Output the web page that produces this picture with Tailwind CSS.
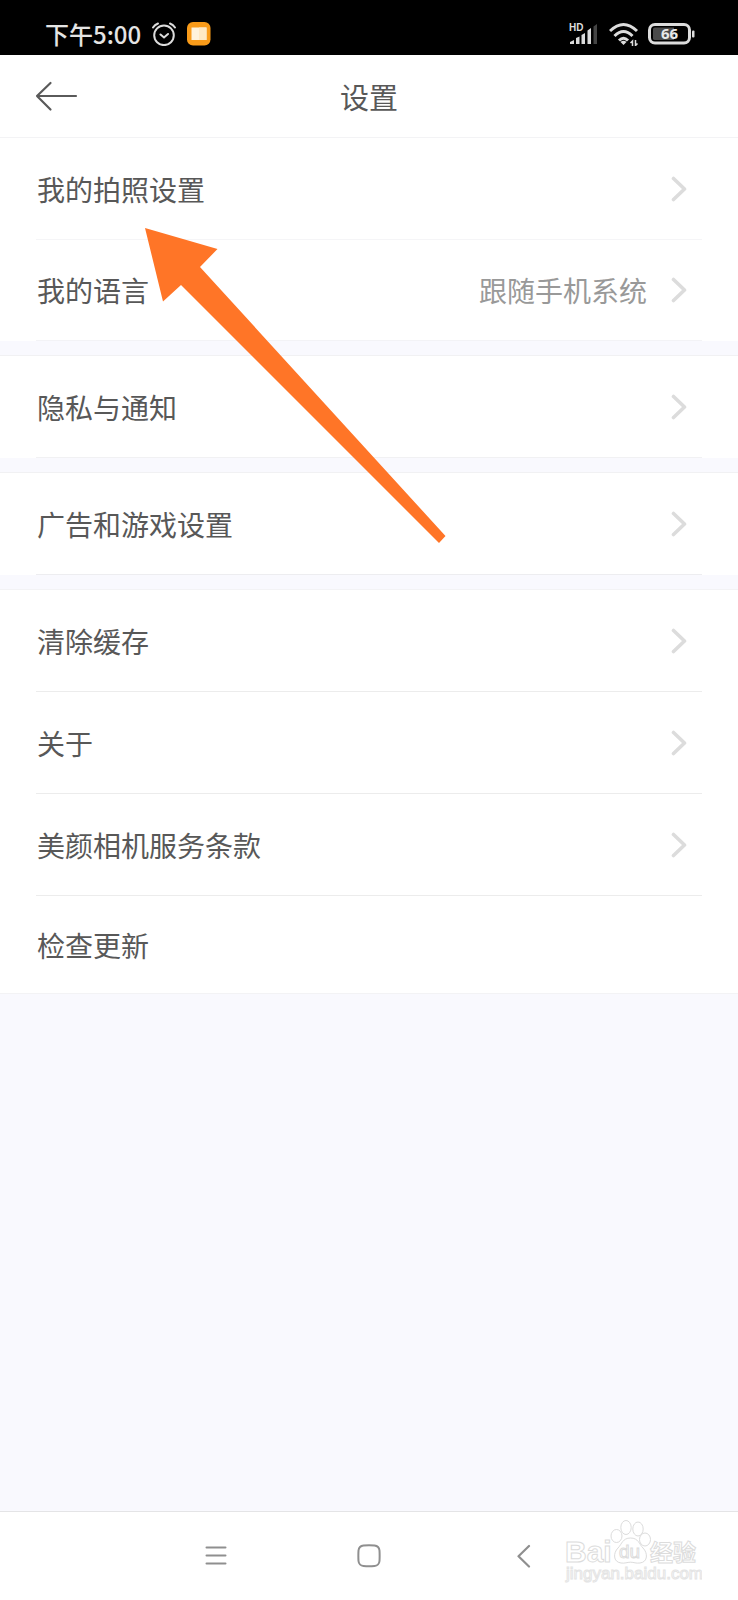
<!DOCTYPE html>
<html lang="zh-CN">
<head>
<meta charset="utf-8">
<meta name="viewport" content="width=device-width, initial-scale=1">
<title>设置</title>
<script src="https://cdn.jsdelivr.net/npm/@tailwindcss/browser@4"></script>
</head>
<body class="relative flex min-h-screen flex-col bg-[#f9f9fe] font-['Noto_Sans_CJK_SC',sans-serif] text-[28px] leading-10 text-[#585858]">

<div class="flex h-[55px] items-center justify-between bg-black pt-3 pr-[42px] pl-[45px] text-[#e4e4e4]">
  <div class="flex items-center">
    <span class="text-2xl leading-8 font-medium">下午5:00</span>
    <svg class="ml-[11px] size-6" viewBox="0 0 24 24" fill="none" stroke="#dcdcdc" stroke-width="2" stroke-linecap="round" aria-label="闹钟"><circle cx="12" cy="13.300" r="9.800"/><path d="M8.500 12.500l3.500 3 4-3.500M1 5.500Q2.800 2.700 6 1.500M23 5.500Q21.200 2.700 18 1.500"/></svg>
    <svg class="ml-[11px] size-6" viewBox="0 0 24 24" aria-label="阅读"><rect width="23.500" height="23.500" rx="6" fill="#f99b19"/><path d="M4.500 5.500h15v12.500h-15z" fill="#fff3dc"/><path d="M12 5.500h7.500V18H12z" fill="#ffe9c4"/></svg>
  </div>
  <div class="flex items-center">
    <svg class="h-6 w-[30px]" viewBox="0 0 30 24" fill="#dcdcdc" aria-label="信号"><text x="0" y="9" font-family="Liberation Sans" font-size="10" font-weight="700">HD</text><path d="M1 22v-2l4-2v4zM7 22v-6l3.500-1.500V22zM12.500 22v-9l3.500-2v11zM18.500 22V8.500L22 6v16z"/><path d="M24.500 22V4.500L28 2v20z" fill="#444"/></svg>
    <svg class="ml-2.5 h-6 w-[30px]" viewBox="0 0 30 24" fill="none" stroke="#dcdcdc" stroke-width="3" aria-label="无线网络"><path d="M1 9Q14.500-4 28 9M5.500 14Q14.500 5 23.500 14M10 18.500Q14.500 14 19 18.500"/><path d="M11.500 20Q14.500 17.500 17.500 20L14.500 23z" fill="#dcdcdc" stroke="none"/><path d="M23.500 24v-5l-2 2M26.500 18v5.500l2-2" stroke-width="1.500"/></svg>
    <svg class="ml-[9px] h-6 w-12" viewBox="0 0 48 24" aria-label="电量"><rect x="1.500" y="2.500" width="40" height="18.500" rx="5.500" fill="none" stroke="#dcdcdc" stroke-width="3"/><path d="M5 7q0-1.500 2-1.500h19v12.500H7q-2 0-2-1.500z" fill="#4a4a4a"/><rect x="44" y="8.500" width="2.500" height="7" rx="1" fill="#dcdcdc"/><text x="21.500" y="17" text-anchor="middle" font-family="Noto Sans" font-size="15" font-weight="700" fill="#e8e8e8">66</text></svg>
  </div>
</div>

<header class="grid h-[83px] grid-cols-[1fr_auto_1fr] items-center border-b border-[#f3f3f5] bg-white px-[35px]">
  <button type="button" aria-label="返回" class="justify-self-start"><svg class="h-8 w-11" viewBox="0 0 44 32" fill="none" stroke="#5a5a5a" stroke-width="2.200" stroke-linecap="round" stroke-linejoin="round"><path d="M41 16H2M15.500 3L2 16l13.500 13.500"/></svg></button>
  <h1 class="text-[29px]">设置</h1>
</header>

<main>
  <section class="bg-white">
    <a href="#" class="mx-9 flex h-[102px] items-center border-b border-[#f5f5f7] pr-[15px] pl-px"><span class="grow">我的拍照设置</span><svg class="h-7 w-4" viewBox="0 0 16 28" fill="none" stroke="#dcdcdc" stroke-width="3.600" stroke-linecap="round" stroke-linejoin="round"><path d="M2.500 3.500L13.500 14 2.500 24.500"/></svg></a>
    <a href="#" class="mx-9 flex h-[101px] items-center border-b border-[#f3f3f6] pr-[15px] pl-px"><span class="grow">我的语言</span><span class="mr-6 text-[#999]">跟随手机系统</span><svg class="h-7 w-4" viewBox="0 0 16 28" fill="none" stroke="#dcdcdc" stroke-width="3.600" stroke-linecap="round" stroke-linejoin="round"><path d="M2.500 3.500L13.500 14 2.500 24.500"/></svg></a>
  </section>
  <section class="mt-3.5 border-t border-[#f1f1f3] bg-white">
    <a href="#" class="mx-9 flex h-[102px] items-center border-b border-[#f1f1f3] pr-[15px] pl-px"><span class="grow">隐私与通知</span><svg class="h-7 w-4" viewBox="0 0 16 28" fill="none" stroke="#dcdcdc" stroke-width="3.600" stroke-linecap="round" stroke-linejoin="round"><path d="M2.500 3.500L13.500 14 2.500 24.500"/></svg></a>
  </section>
  <section class="mt-3.5 border-t border-[#f1f1f3] bg-white">
    <a href="#" class="mx-9 flex h-[102px] items-center border-b border-[#ededf0] pr-[15px] pl-px"><span class="grow">广告和游戏设置</span><svg class="h-7 w-4" viewBox="0 0 16 28" fill="none" stroke="#dcdcdc" stroke-width="3.600" stroke-linecap="round" stroke-linejoin="round"><path d="M2.500 3.500L13.500 14 2.500 24.500"/></svg></a>
  </section>
  <section class="mt-3.5 border-y border-[#f3f3f5] bg-white">
    <a href="#" class="mx-9 flex h-[102px] items-center border-b border-[#ececec] pr-[15px] pl-px"><span class="grow">清除缓存</span><svg class="h-7 w-4" viewBox="0 0 16 28" fill="none" stroke="#dcdcdc" stroke-width="3.600" stroke-linecap="round" stroke-linejoin="round"><path d="M2.500 3.500L13.500 14 2.500 24.500"/></svg></a>
    <a href="#" class="mx-9 flex h-[102px] items-center border-b border-[#ececec] pr-[15px] pl-px"><span class="grow">关于</span><svg class="h-7 w-4" viewBox="0 0 16 28" fill="none" stroke="#dcdcdc" stroke-width="3.600" stroke-linecap="round" stroke-linejoin="round"><path d="M2.500 3.500L13.500 14 2.500 24.500"/></svg></a>
    <a href="#" class="mx-9 flex h-[102px] items-center border-b border-[#ececec] pr-[15px] pl-px"><span class="grow">美颜相机服务条款</span><svg class="h-7 w-4" viewBox="0 0 16 28" fill="none" stroke="#dcdcdc" stroke-width="3.600" stroke-linecap="round" stroke-linejoin="round"><path d="M2.500 3.500L13.500 14 2.500 24.500"/></svg></a>
    <a href="#" class="mx-9 flex h-[97px] items-center pl-px">检查更新</a>
  </section>
</main>

<nav class="relative mt-auto border-t border-[#e4e4e6] bg-white" aria-label="系统导航">
  <div class="mx-auto grid h-[88px] w-[62%] grid-cols-3 place-items-center">
    <button type="button" aria-label="菜单"><svg class="size-6" viewBox="0 0 24 24" stroke="#8f8f8f" stroke-width="2" stroke-linecap="round"><path d="M2.500 3.500h19M2.500 11.500h19M2.500 19.500h19"/></svg></button>
    <button type="button" aria-label="主页"><svg class="size-6" viewBox="0 0 24 24" fill="none" stroke="#8f8f8f" stroke-width="2"><path d="M6.500 1.500Q12 .8 17.500 1.500 22 2 22.500 6.500 22.800 12 22.500 17 22 21.500 17.500 22 12 22.500 6.500 22 2 21.500 1.500 17 1.200 12 1.500 6.500 2 2 6.500 1.500z"/></svg></button>
    <button type="button" aria-label="后退"><svg class="size-6" viewBox="0 0 24 24" fill="none" stroke="#8f8f8f" stroke-width="2.200" stroke-linecap="round" stroke-linejoin="round"><path d="M19 2L8.500 12.200 19 22.500"/></svg></button>
  </div>
  <svg class="absolute top-2 right-9 h-[66px] w-[140px]" viewBox="0 0 140 66" fill="#fff" stroke="#dcdcdc" stroke-width="1" aria-label="百度经验">
    <text x="3" y="42" font-family="Liberation Sans" font-size="30" font-weight="700">Bai</text>
    <ellipse cx="54.500" cy="16" rx="5.500" ry="6.500"/><ellipse cx="64" cy="7.500" rx="5.200" ry="7"/><ellipse cx="76" cy="9" rx="5.200" ry="7"/><ellipse cx="83" cy="19.500" rx="5.500" ry="6.500"/>
    <path d="M68.500 18c8 0 8.500 6 12.500 10 5 5 5 14-3 15-4 .6-6-.8-9.500-.8s-5.500 1.400-9.500.8c-8-1-8-10-3-15 4-4 4.500-10 12.500-10z"/>
    <text x="57" y="38" font-family="Liberation Sans" font-size="19" font-weight="400">du</text>
    <text x="88" y="41" font-family="Noto Sans CJK SC" font-size="23" font-weight="700">经验</text>
    <text x="4" y="59" font-family="Liberation Sans" font-size="17" stroke="#e4e4e4">jingyan.baidu.com</text>
  </svg>
</nav>

<svg class="pointer-events-none absolute top-[227px] left-[144px] h-[318px] w-[304px]" viewBox="144 227 304 318" aria-hidden="true"><path d="M145 228l72.500 21L200 267l245.500 269-6.500 7L181 285l-18 16.500z" fill="#ff7527"/></svg>
</body>
</html>
